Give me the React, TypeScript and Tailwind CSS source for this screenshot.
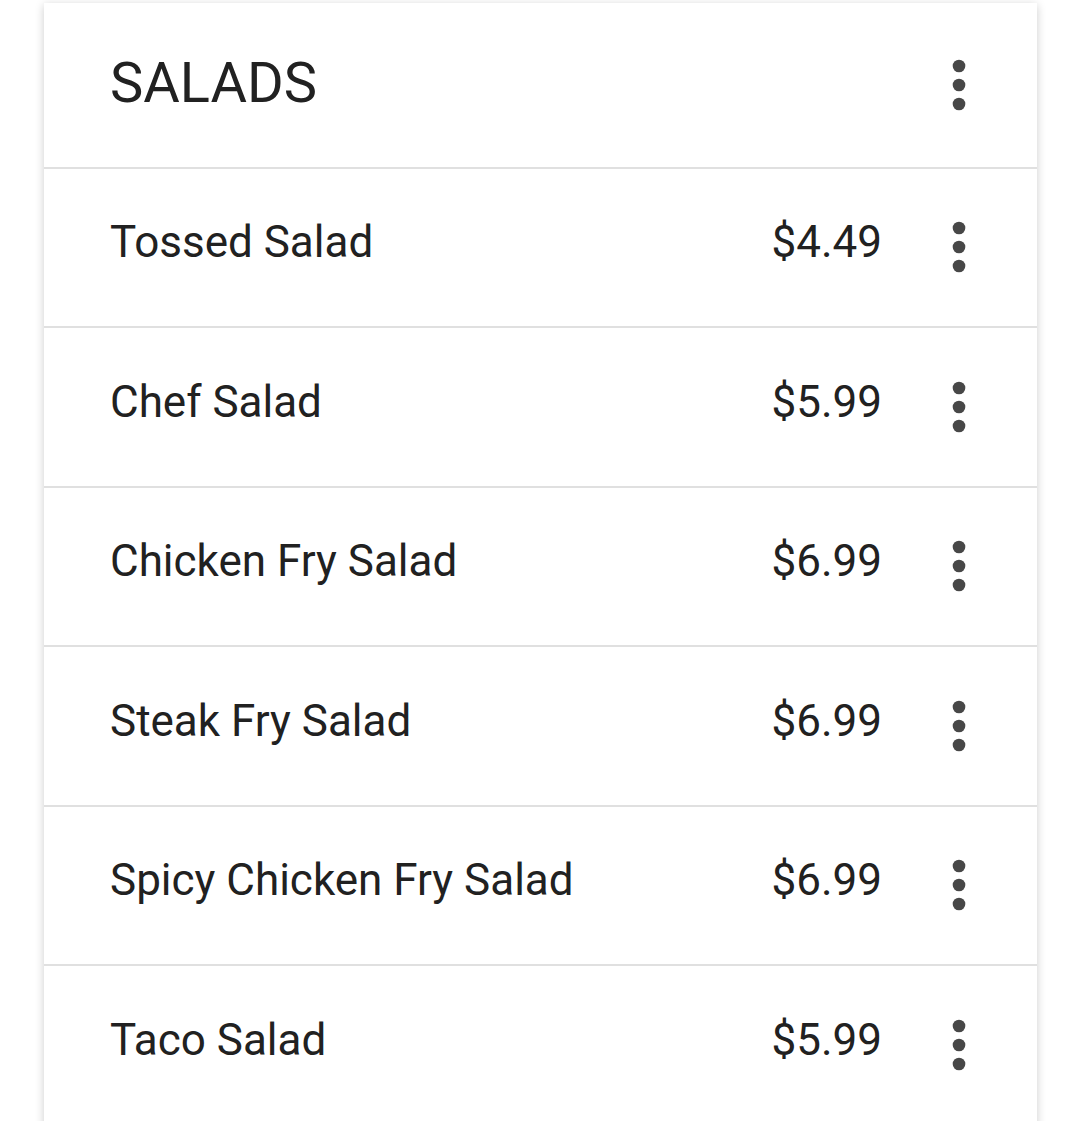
import React from "react";

const items: { name: string; price: string }[] = [
  { name: "Tossed Salad", price: "$4.49" },
  { name: "Chef Salad", price: "$5.99" },
  { name: "Chicken Fry Salad", price: "$6.99" },
  { name: "Steak Fry Salad", price: "$6.99" },
  { name: "Spicy Chicken Fry Salad", price: "$6.99" },
  { name: "Taco Salad", price: "$5.99" },
];

function MoreVert() {
  return (
    <svg width="76" height="76" viewBox="0 0 24 24" className="shrink-0">
      <circle cx="12" cy="6" r="2" fill="#474747" />
      <circle cx="12" cy="12" r="2" fill="#474747" />
      <circle cx="12" cy="18" r="2" fill="#474747" />
    </svg>
  );
}

export default function App() {
  return (
    <div
      className="w-[1080px] h-[1121px] overflow-hidden bg-white"
      style={{ fontFamily: "Roboto, 'Liberation Sans', sans-serif" }}
    >
      <div className="ml-[44px] mt-[3px] w-[993px] h-[1200px] bg-white shadow-[0_2px_9px_rgba(0,0,0,0.2)]">
        <div className="h-[165.5px] border-b-2 border-[#e0e0e0] flex items-center pl-[66px] pr-[40px]">
          <div className="flex-1 pb-[4px] text-[56px] leading-none text-[#212121]">
            SALADS
          </div>
          <MoreVert />
        </div>
        {items.map((it) => (
          <div
            key={it.name}
            className="h-[159.5px] border-b-2 border-[#e0e0e0] flex items-center pl-[66px] pr-[40px]"
          >
            <div className="flex-1 pb-[10px] text-[44px] leading-none text-[#212121]">
              {it.name}
            </div>
            <div className="pb-[10px] text-[44px] leading-none text-[#212121] mr-[39px]">
              {it.price}
            </div>
            <MoreVert />
          </div>
        ))}
      </div>
    </div>
  );
}
